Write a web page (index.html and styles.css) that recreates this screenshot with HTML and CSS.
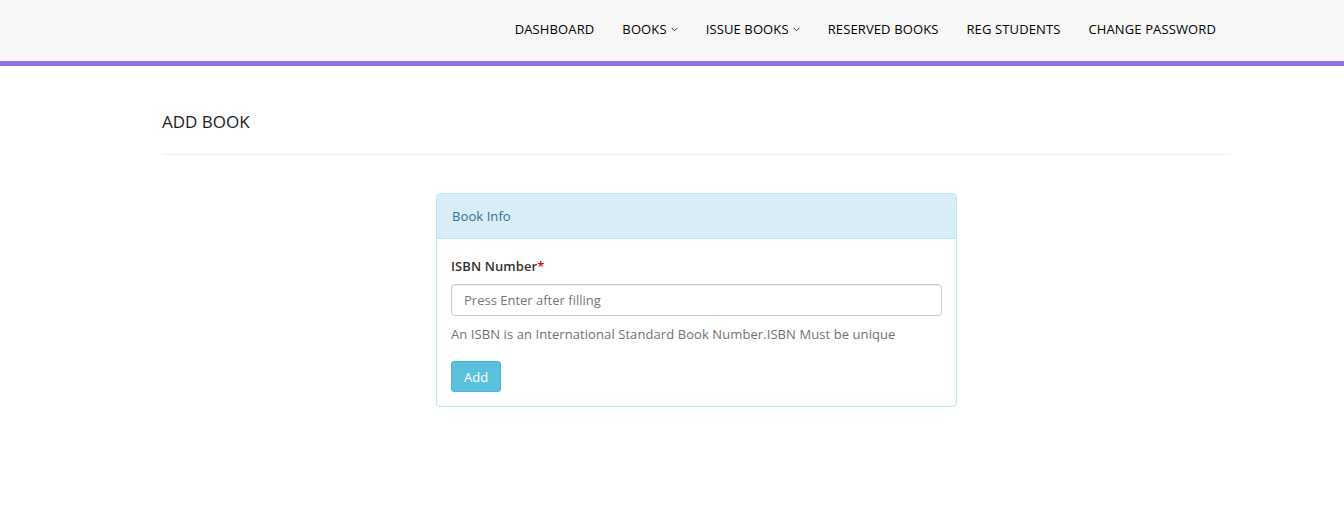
FILE: index.html
```html
<!DOCTYPE html>
<html>
<head>
<meta charset="utf-8">
<title>Add Book</title>
<link rel="stylesheet" href="styles.css">
</head>
<body>
<header class="menu-section">
  <div class="container nav-wrap">
    <nav class="nav">
      <a class="nav-link" href="#">Dashboard</a>
      <a class="nav-link" href="#">Books <svg class="caret" width="7" height="5" viewBox="0 0 7 5"><polyline points="0.5,0.8 3.5,3.8 6.5,0.8" fill="none" stroke="#333" stroke-width="1"/></svg></a>
      <a class="nav-link" href="#">Issue Books <svg class="caret" width="7" height="5" viewBox="0 0 7 5"><polyline points="0.5,0.8 3.5,3.8 6.5,0.8" fill="none" stroke="#333" stroke-width="1"/></svg></a>
      <a class="nav-link" href="#">Reserved Books</a>
      <a class="nav-link" href="#">Reg Students</a>
      <a class="nav-link" href="#">Change Password</a>
    </nav>
  </div>
</header>

<main class="container">
  <h4 class="header-line">Add Book</h4>

  <div class="panel-row">
    <div class="panel">
      <div class="panel-heading">Book Info</div>
      <div class="panel-body">
        <label class="field-label">ISBN Number<span class="req">*</span></label>
        <input class="form-control" type="text" placeholder="Press Enter after filling">
        <p class="help-block">An ISBN is an International Standard Book Number.ISBN Must be unique</p>
        <button class="btn-info" type="button">Add</button>
      </div>
    </div>
  </div>
</main>
</body>
</html>
```

FILE: styles.css
```css
* { box-sizing: border-box; }

body {
  margin: 0;
  font-family: "Open Sans", "Noto Sans", sans-serif;
  font-size: 13px;
  color: #333;
  background: #fff;
  letter-spacing: 0.08px;
}

.container {
  width: 1068px;
  margin-left: 162px;
}

.menu-section {
  background: #f7f7f7;
  height: 66px;
  border-bottom: 5px solid #9170e4;
}

.nav-wrap {
  display: flex;
  justify-content: flex-end;
  height: 61px;
}

.nav {
  display: flex;
  align-items: center;
  padding-bottom: 3px;
}

.nav-link {
  display: flex;
  align-items: center;
  padding: 0 14px;
  line-height: 20px;
  color: #000;
  text-decoration: none;
  text-transform: uppercase;
  font-size: 13px;
  letter-spacing: 0.12px;
}

.caret {
  margin-left: 4px;
  margin-top: 1px;
}

.header-line {
  margin: 44px 0 0;
  padding-bottom: 20px;
  border-bottom: 1px solid #eee;
  font-size: 17px;
  line-height: 24px;
  font-weight: 500;
  letter-spacing: 0;
  text-transform: uppercase;
  color: #222;
}

.panel-row {
  display: flex;
  padding-left: 274px;
  margin-top: 38px;
}

.panel {
  width: 521px;
  border: 1px solid #bce8f1;
  border-radius: 4px;
  background: #fff;
}

.panel-heading {
  background: #d9edf7;
  color: #31708f;
  border-bottom: 1px solid #bce8f1;
  border-radius: 3px 3px 0 0;
  padding: 12px 15px 11px;
  line-height: 21px;
  font-size: 13px;
}

.panel-body {
  padding: 18px 14px 14px 14px;
  display: flex;
  flex-direction: column;
  align-items: flex-start;
}

.field-label {
  font-weight: 600;
  line-height: 18px;
  margin-bottom: 9px;
  color: #333;
}

.req { color: #e00; }

.form-control {
  width: 100%;
  height: 32px;
  border: 1px solid #ccc;
  border-radius: 4px;
  padding: 6px 12px;
  font-family: inherit;
  font-size: 13px;
  color: #555;
  box-shadow: inset 0 1px 1px rgba(0,0,0,.075);
}

.form-control::placeholder { color: #777; }

.help-block {
  margin: 9px 0 0;
  line-height: 18px;
  color: #737373;
}

.btn-info {
  margin-top: 18px;
  height: 31px;
  padding: 0 12px;
  font-family: inherit;
  font-size: 13px;
  letter-spacing: 0;
  color: #fff;
  background: #5bc0de;
  border: 1px solid #46b8da;
  border-radius: 3px;
}
```
